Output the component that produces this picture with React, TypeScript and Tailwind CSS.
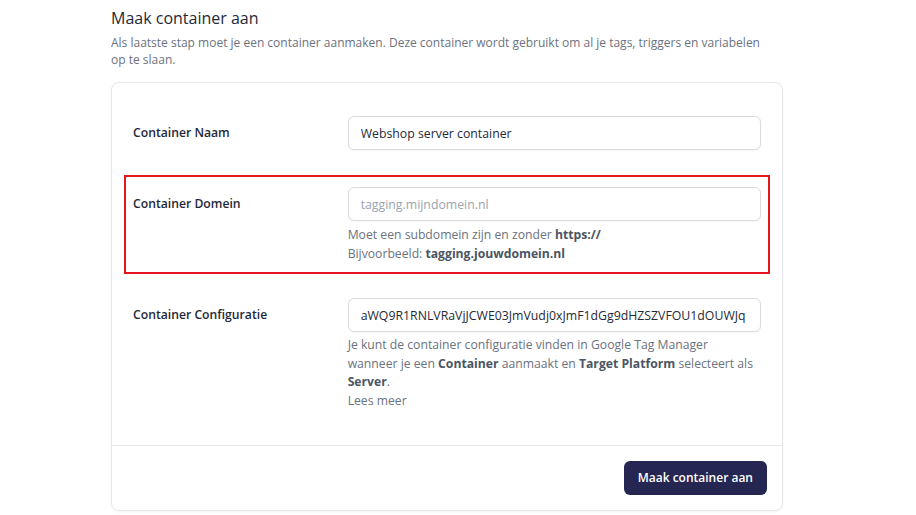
const font = { fontFamily: "'Open Sans', 'Noto Sans', sans-serif" }

const Label = ({ children }: { children: React.ReactNode }) => (
  <div className="h-[34px] flex items-center text-[12.2px] font-semibold text-[#1f2937]">
    {children}
  </div>
)

const Input = ({ value, placeholder }: { value?: string; placeholder?: string }) => (
  <input
    readOnly
    value={value}
    placeholder={placeholder}
    className="w-full h-[34px] px-3 rounded-md border border-[#d9dbe0] bg-white text-[12.3px] text-[#1f2937] placeholder:text-[#9ca3af] shadow-[0_1px_2px_rgba(0,0,0,0.04)] outline-none"
  />
)

export default function App() {
  return (
    <div className="w-[916px] h-[515px] bg-white overflow-hidden" style={font}>
      <div className="ml-[111px] w-[672px] pt-[6px]">
        <h2 className="text-[16px] leading-[24px] text-[#1f2937]">Maak container aan</h2>
        <p className="mt-[4px] text-[12px] leading-[17px] text-[#6b7280]">
          Als laatste stap moet je een container aanmaken. Deze container wordt gebruikt om al je tags, triggers en variabelen
          <br />
          op te slaan.
        </p>

        <div className="mt-[14px] rounded-lg border border-[#e5e7eb] shadow-[0_1px_3px_rgba(0,0,0,0.05)]">
          <div className="px-[21px] pt-[33px] pb-[34px]">
            {/* Naam */}
            <div className="grid grid-cols-3 gap-4">
              <Label>Container Naam</Label>
              <div className="col-span-2">
                <Input value="Webshop server container" />
              </div>
            </div>

            {/* Domein, highlighted */}
            <div className="mt-[25px] -mx-[9px] px-[7px] pt-[10px] pb-[9px] border-2 border-[#e8141c]">
              <div className="grid grid-cols-3 gap-4">
                <Label>Container Domein</Label>
                <div className="col-span-2">
                  <Input placeholder="tagging.mijndomein.nl" />
                  <p className="mt-[4px] text-[12.2px] leading-[19px] text-[#6b7280]">
                    Moet een subdomein zijn en zonder <b className="text-[#4b5563]">https://</b>
                    <br />
                    Bijvoorbeeld: <b className="text-[#4b5563]">tagging.jouwdomein.nl</b>
                  </p>
                </div>
              </div>
            </div>

            {/* Configuratie */}
            <div className="mt-[24px] grid grid-cols-3 gap-4">
              <Label>Container Configuratie</Label>
              <div className="col-span-2">
                <Input value="aWQ9R1RNLVRaVjJCWE03JmVudj0xJmF1dGg9dHZSZVFOU1dOUWJq" />
                <p className="mt-[4px] text-[12.2px] leading-[18.7px] text-[#6b7280]">
                  Je kunt de container configuratie vinden in Google Tag Manager
                  <br />
                  wanneer je een <b className="text-[#4b5563]">Container</b> aanmaakt en{" "}
                  <b className="text-[#4b5563]">Target Platform</b> selecteert als
                  <br />
                  <b className="text-[#4b5563]">Server</b>.
                  <br />
                  Lees meer
                </p>
              </div>
            </div>
          </div>

          <div className="border-t border-[#e5e7eb] px-[15px] py-[15px] flex justify-end">
            <button className="h-[34px] px-[14px] rounded-md bg-[#262652] text-white text-[12px] font-semibold">
              Maak container aan
            </button>
          </div>
        </div>
      </div>
    </div>
  )
}
